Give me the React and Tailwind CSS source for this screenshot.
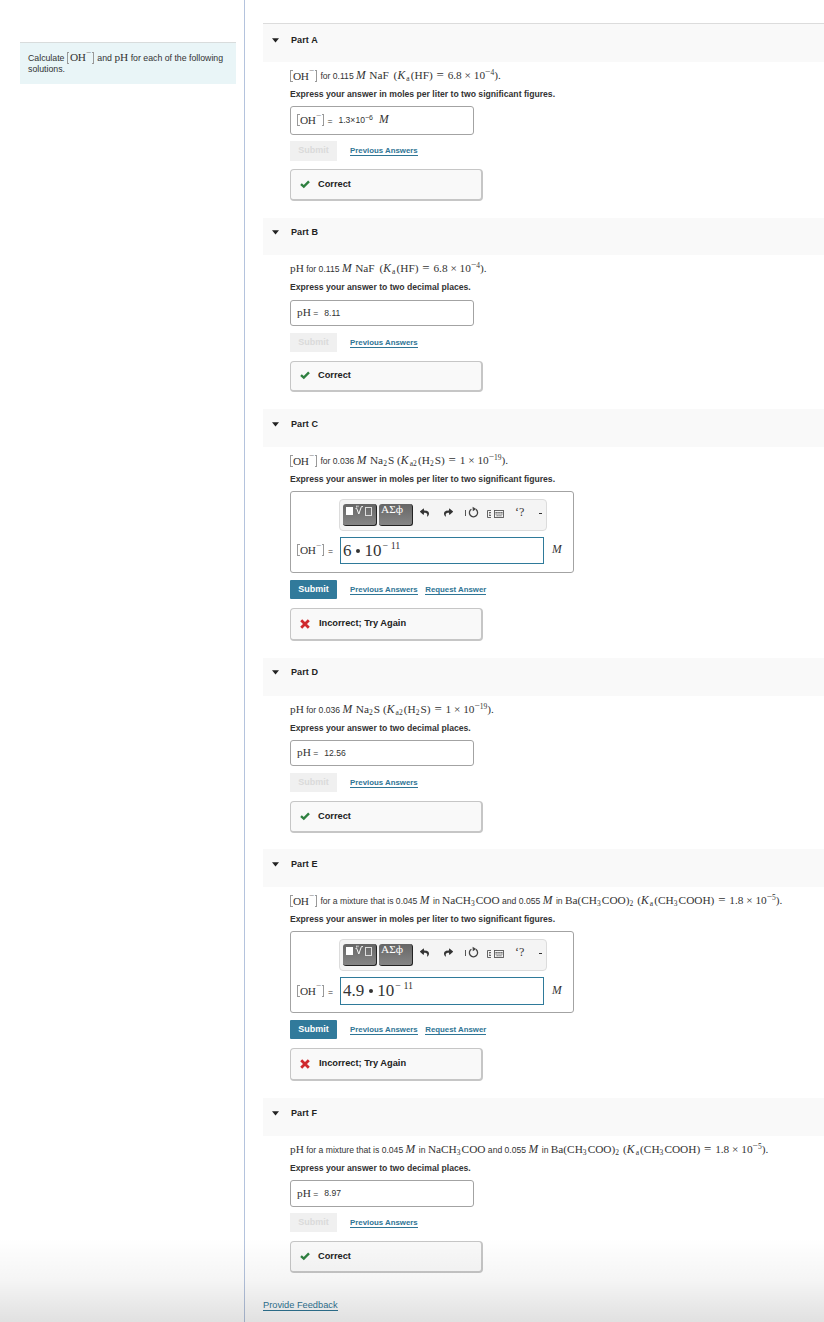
import { FaReply, FaShare } from "react-icons/fa";

// upright math text
function Rm({ children }) {
  return (
    <span className="font-['Liberation_Serif',serif] text-[11.3px] whitespace-pre">
      {children}
    </span>
  );
}

// italic math variable
function It({ children }) {
  return (
    <span className="mr-[1.2px] font-['Liberation_Serif',serif] text-[11.6px] italic">
      {children}
    </span>
  );
}

function Sub({ children }) {
  return (
    <span className="relative top-[2px] mr-[1.1px] font-['Liberation_Serif',serif] text-[7.5px]">
      {children}
    </span>
  );
}

function Sup({ children }) {
  return (
    <span className="relative -top-[4px] font-['Liberation_Serif',serif] text-[7.5px]">
      <span className="text-[9.5px] leading-none">−</span>
      {children}
    </span>
  );
}

// relation with its wider side gaps
function Eq() {
  return (
    <span className="mx-[3.8px] font-['Liberation_Serif',serif] text-[13px] leading-none">
      =
    </span>
  );
}

// [OH-]
function Hydroxide() {
  return (
    <span className="relative -top-px inline-flex h-[11px] w-[28px] items-center align-middle whitespace-nowrap font-['Liberation_Serif',serif] text-[11.3px]">
      <span className="h-[12px] w-[2.5px] border border-r-0 border-[#999]" />
      <span className="ml-[0.5px] tracking-[-0.4px]">OH</span>
      <span className="mb-[8px] ml-[0.5px] text-[9.5px] leading-[9px] text-[#777]">
        −
      </span>
      <span className="ml-[0.5px] h-[12px] w-[2.5px] border border-l-0 border-[#999]" />
    </span>
  );
}

function Fluoride() {
  return (
    <>
      {" for 0.115 "}
      <It>M</It> <Rm>NaF</Rm>
      <span className="ml-[2px]">
        <Rm> (</Rm>
      </span>
      <It>K</It>
      <Sub>a</Sub>
      <Rm>(HF)</Rm>
      <Eq />
      <Rm>6.8 × 10</Rm>
      <Sup>4</Sup>
      <Rm>).</Rm>
    </>
  );
}

function Sulfide() {
  return (
    <>
      {" for 0.036 "}
      <It>M</It> <Rm>Na</Rm>
      <Sub>2</Sub>
      <Rm>S (</Rm>
      <It>K</It>
      <Sub>a2</Sub>
      <Rm>(H</Rm>
      <Sub>2</Sub>
      <Rm>S)</Rm>
      <Eq />
      <Rm>1 × 10</Rm>
      <Sup>19</Sup>
      <Rm>).</Rm>
    </>
  );
}

function Mixture() {
  return (
    <>
      {" for a mixture that is 0.045 "}
      <It>M</It>
      {" in "}
      <Rm>NaCH</Rm>
      <Sub>3</Sub>
      <Rm>COO</Rm>
      {" and 0.055 "}
      <It>M</It>
      {" in "}
      <Rm>Ba(CH</Rm>
      <Sub>3</Sub>
      <Rm>COO)</Rm>
      <Sub>2</Sub>
      <Rm> (</Rm>
      <It>K</It>
      <Sub>a</Sub>
      <Rm>(CH</Rm>
      <Sub>3</Sub>
      <Rm>COOH)</Rm>
      <Eq />
      <Rm>1.8 × 10</Rm>
      <Sup>5</Sup>
      <Rm>).</Rm>
    </>
  );
}

const MOLES = "Express your answer in moles per liter to two significant figures.";
const DECIMALS = "Express your answer to two decimal places.";

const parts = [
  {
    id: "A",
    size: "h-[195px]",
    header: "h-[39px] border-t border-[#dcdcdc] pb-[4px]",
    quantity: "oh",
    context: <Fluoride />,
    hint: MOLES,
    box: "mt-[7px] h-[29px]",
    actions: "mt-[6px] h-[20px]",
    result: "mt-[8px] h-[32px]",
    correct: true,
    answer: (
      <>
        1.3×10<span className="relative -top-[3px] text-[7px]">−6</span>
        <span className="ml-[6px]">
          <It>M</It>
        </span>
      </>
    ),
  },
  {
    id: "B",
    size: "h-[191px]",
    header: "h-[37px] pb-[7px]",
    quantity: "ph",
    context: <Fluoride />,
    hint: DECIMALS,
    box: "mt-[8px] h-[26px] pb-px",
    actions: "mt-[7px] h-[19px]",
    result: "mt-[9px] h-[31px] pb-px",
    correct: true,
    answer: "8.11",
  },
  {
    id: "C",
    size: "h-[249px]",
    header: "h-[38px] pb-[6px]",
    quantity: "oh",
    context: <Sulfide />,
    hint: MOLES,
    actions: "mt-[7px] h-[19px]",
    result: "mt-[9px] h-[33px]",
    correct: false,
    field: "h-[27px]",
    mantissa: "6",
  },
  {
    id: "D",
    size: "h-[191px]",
    header: "h-[38px] pb-[8px]",
    quantity: "ph",
    context: <Sulfide />,
    hint: DECIMALS,
    box: "mt-[7px] h-[26px] pb-px",
    actions: "mt-[7px] h-[19px]",
    result: "mt-[9px] h-[32px]",
    correct: true,
    answer: "12.56",
  },
  {
    id: "E",
    size: "h-[249px]",
    header: "h-[38px] pb-[6px]",
    quantity: "oh",
    context: <Mixture />,
    hint: MOLES,
    actions: "mt-[7px] h-[19px]",
    result: "mt-[9px] h-[33px]",
    correct: false,
    field: "h-[28px]",
    mantissa: "4.9",
  },
  {
    id: "F",
    size: "h-[191px]",
    header: "h-[38px] pb-[6px]",
    quantity: "ph",
    context: <Mixture />,
    hint: DECIMALS,
    box: "mt-[7px] h-[27px] pb-px",
    actions: "mt-[6px] h-[19px]",
    result: "mt-[9px] h-[32px]",
    correct: true,
    answer: "8.97",
  },
];

function Quantity({ kind }) {
  return kind === "oh" ? <Hydroxide /> : <Rm>pH</Rm>;
}

function Toolbar() {
  return (
    <div className="ml-[48px] flex h-[32px] w-[208px] items-start rounded border border-[#dcdcdc] bg-[#f4f4f4] pt-[4px] pl-[3px] text-[#333]">
      <div className="flex h-[22px] w-[34px] rounded-[3px] border-r border-b border-[#222] bg-linear-to-b from-[#666] to-[#858585] pt-[3px] pl-[3px]">
        <span className="h-[8px] w-[7px] bg-white" />
        <svg
          className="-mt-[2px] ml-[2px]"
          width="8"
          height="10"
          viewBox="0 0 8 10"
          fill="none"
          stroke="#f4f4f4"
        >
          <path d="M.5 3.6L1.6 3.2L3.8 9L6.4 1.6H8" strokeWidth="1" />
          <path d="M1.6 .6V2.4M3 .5V2.2" strokeWidth=".8" />
        </svg>
        <span className="ml-[2px] h-[9px] w-[7px] border border-[#ddd]" />
      </div>
      <div className="ml-[2px] h-[22px] w-[34px] overflow-hidden rounded-[3px] border-r border-b border-[#222] bg-linear-to-b from-[#666] to-[#858585] pl-[2px] font-['Liberation_Serif',serif] text-[11.3px] leading-[11px] text-white">
        ΑΣф
      </div>
      <FaReply className="mt-[4px] ml-[7px] h-[9px] w-[9px]" />
      <FaShare className="mt-[4px] ml-[15px] h-[9px] w-[9px]" />
      <span className="mt-[6px] ml-[12px] h-[6px] w-px bg-[#555]" />
      <svg
        className="mt-[2px] ml-[2px]"
        width="11"
        height="13"
        viewBox="0 0 11 13"
      >
        <path
          d="M3.4 3.2A4.1 4.1 0 1 0 7.9 3.4"
          fill="none"
          stroke="#444"
          strokeWidth="1.3"
        />
        <path d="M4.6 .8L8.2 2.9L4.8 5.2Z" fill="#444" />
      </svg>
      <svg
        className="mt-[6px] ml-[8px]"
        width="17"
        height="9"
        viewBox="0 0 17 9"
        fill="none"
        stroke="#555"
      >
        <path d="M4 .5H.5V7.5H4M2 2.5H4M2 4H3.5M2 5.5H4" strokeWidth=".9" />
        <rect x="7.5" y=".5" width="9" height="7" strokeWidth=".9" />
        <path
          d="M8.5 2.5H16M8.5 4H16M9.5 5.8H14.5"
          strokeWidth="1"
          strokeDasharray="1.3 .6"
        />
      </svg>
      <span className="ml-[11px] font-['Liberation_Serif',serif] text-[12px] leading-[17px]">
        ‘?
      </span>
      <span className="mt-[9px] mr-[4px] ml-auto h-px w-[3px] bg-[#333]" />
    </div>
  );
}

function Editor({ part }) {
  return (
    <div className="mt-[7px] h-[82px] w-[284px] rounded-[3px] border border-[#a3a3a3] bg-white pt-[7px]">
      <Toolbar />
      <div className="mt-[6px] flex items-center pl-[6px]">
        <div className="mt-[2px] flex w-[43px] items-center whitespace-nowrap">
          <Hydroxide />
          <span className="ml-[3px]">=</span>
        </div>
        <div
          className={`${part.field} flex w-[204px] items-center border border-[#2f7a9a] pl-[2px] font-['Liberation_Serif',serif] text-[17px] whitespace-pre`}
        >
          <span>{part.mantissa}</span>
          <span className="mx-[4.5px] h-[4px] w-[4px] rounded-full bg-[#333]" />
          <span>10</span>
          <span className="mb-[10px] ml-px text-[10px] leading-[12px]">
            − 11
          </span>
        </div>
        <span className="mb-px ml-[8px]">
          <It>M</It>
        </span>
      </div>
    </div>
  );
}

function CheckMark() {
  return (
    <svg className="mr-[8px] mb-[2px]" width="10" height="10" viewBox="0 0 10 10">
      <path
        d="M1 5.1L3.8 7.6L9 2.4"
        fill="none"
        stroke="#2f8040"
        strokeWidth="2.4"
      />
    </svg>
  );
}

function CrossMark() {
  return (
    <svg className="mr-[9px]" width="10" height="10" viewBox="0 0 10 10">
      <path
        d="M1.2 1.2L8.8 8.8M8.8 1.2L1.2 8.8"
        fill="none"
        stroke="#cf2a2e"
        strokeWidth="2.8"
      />
    </svg>
  );
}

function Part({ part }) {
  return (
    <section className={`${part.size} shrink-0`}>
      <header
        className={`${part.header} flex items-center bg-[#f9f9f9] pl-[9px]`}
      >
        <svg className="mb-[2px]" width="7" height="5" viewBox="0 0 7 5">
          <path d="M0 .3H7L3.5 4.5Z" fill="#222" />
        </svg>
        <h2 className="ml-[12px] text-[9px] font-bold tracking-[0.1px] text-[#222]">
          Part {part.id}
        </h2>
      </header>
      <div className="pl-[27px]">
        <p className="flex h-[28px] items-center leading-[14px] whitespace-pre">
          <span>
            <Quantity kind={part.quantity} />
            {part.context}
          </span>
        </p>
        <p className="flex h-[9px] items-center text-[8.65px] font-bold whitespace-nowrap">
          {part.hint}
        </p>
        {part.correct ? (
          <div
            className={`${part.box} flex w-[184px] items-center rounded-[3px] border border-[#a3a3a3] bg-white pl-[6px] leading-[14px] whitespace-pre`}
          >
            <span>
              <Quantity kind={part.quantity} />
              {" "}=
            </span>
            <span className="ml-[6px]">{part.answer}</span>
          </div>
        ) : (
          <Editor part={part} />
        )}
        <div className={`${part.actions} flex items-center`}>
          <button
            disabled={part.correct}
            className={`h-full w-[47px] text-[9px] font-bold ${
              part.correct
                ? "bg-[#f0f0f0] text-[#dadada]"
                : "rounded-[1px] bg-[#317a9b] text-white"
            }`}
          >
            Submit
          </button>
          <a className="mt-px ml-[13px] border-b border-[#2f7595] text-[7.85px] leading-[8px] font-bold text-[#2f7595]">
            Previous Answers
          </a>
          {!part.correct && (
            <a className="mt-px ml-[7.5px] border-b border-[#2f7595] text-[7.85px] leading-[8px] font-bold text-[#2f7595]">
              Request Answer
            </a>
          )}
        </div>
        <div
          className={`${part.result} flex w-[193px] items-center rounded-[4px] border border-r-2 border-b-2 border-[#c6c6c6] bg-[#f9f9f9] pl-[9px] text-[9.25px] font-bold text-[#222]`}
        >
          {part.correct ? <CheckMark /> : <CrossMark />}
          {part.correct ? "Correct" : "Incorrect; Try Again"}
        </div>
      </div>
    </section>
  );
}

export default function App() {
  return (
    <div className="relative flex h-[1322px] w-[824px] overflow-hidden bg-white font-['Liberation_Sans',Arial,sans-serif] text-[8.6px] text-[#333]">
      <aside className="w-[245px] shrink-0 border-r border-[#b4c3dd] pt-[42px] pl-[20px]">
        <div className="h-[42px] w-[216px] border-t border-[#d8dcdc] bg-[#e9f5f7] pt-[9px] pl-[8px] text-[8.75px] leading-[11px] whitespace-nowrap">
          Calculate <Hydroxide /> and <Rm>pH</Rm> for each of the following
          <br />
          solutions.
        </div>
      </aside>
      <main className="flex min-w-0 flex-1 flex-col pt-[23px] pl-[18px]">
        {parts.map((part) => (
          <Part key={part.id} part={part} />
        ))}
        <footer className="pt-[10px]">
          <a className="border-b border-[#2f7595] text-[9.25px] text-[#2f7595]">
            Provide Feedback
          </a>
        </footer>
      </main>
      {/* shade at the bottom edge of the page */}
      <div className="pointer-events-none absolute inset-x-0 bottom-0 h-[84px] bg-linear-to-b from-black/0 via-black/4 to-black/12" />
    </div>
  );
}
